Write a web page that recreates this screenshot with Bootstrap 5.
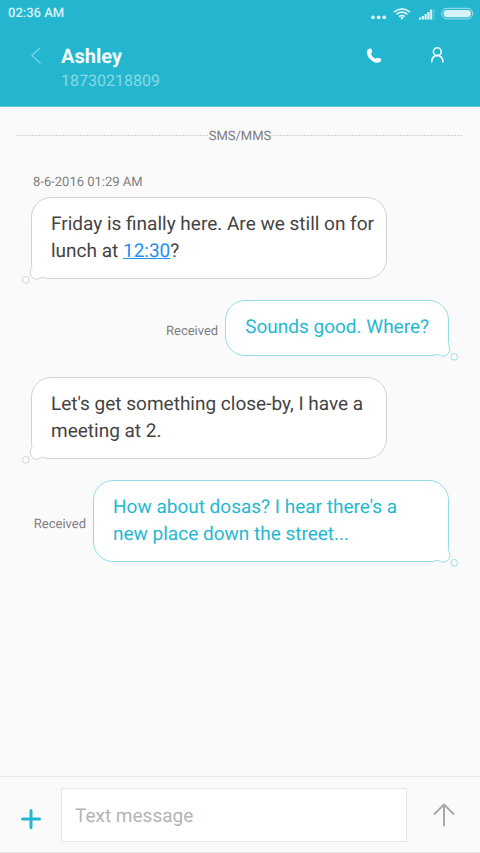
<!DOCTYPE html>
<html lang="en">
<head>
<meta charset="utf-8">
<meta name="viewport" content="width=device-width, initial-scale=1">
<title>Ashley - Messages</title>
<link href="https://cdn.jsdelivr.net/npm/bootstrap@5.3.0/dist/css/bootstrap.min.css" rel="stylesheet">
<style>
  body { font-family: Roboto, "Liberation Sans", sans-serif; background: #fafafa; color: #444; text-rendering: geometricPrecision; }
  svg { display: block; flex: none; }
  .topbar { background: #25b6cf; border-bottom: 1px solid #5fc9dc; }
  .status { height: 27px; padding: 0 6px 0 8px; font-size: 13px; line-height: 29px; font-weight: 500; color: #d8f3f7; }
  .contact { height: 79px; padding: 16px 33px 0 26px; }
  .contact h1 { font-size: 20px; line-height: 27px; font-weight: 700; color: #f2fcfd; }
  .contact p { font-size: 16px; line-height: 22px; color: #88d9e5; }
  .icon-btn { background: none; border: 0; padding: 0; }
  .call { margin-right: 46px; }
  .thread { padding: 17px 17px 0; }
  .divider { font-size: 13px; line-height: 20px; color: #7d7d7d; }
  .divider-label { padding-top: 3px; }
  .dashes { height: 1px; background: repeating-linear-gradient(90deg, #d4d4d4 0 2px, transparent 2px 3px); }
  .messages { padding: 26px 14px 20px; }
  .stamp, .state { font-size: 13px; line-height: 20px; color: #808080; }
  .stamp { padding-left: 2px; margin-bottom: 4px; }
  .state { padding-top: 7px; margin-right: 7px; }
  .message { margin-bottom: 21px; }
  .bubble { position: relative; max-width: 356px; min-height: 56px; padding: 12px 19px 14px; border: 1px solid #d2d2d2; border-radius: 20px; background: #fff; font-size: 19px; line-height: 27px; }
  .incoming .bubble { padding-right: 10px; }
  .outgoing .bubble { border-color: #93dde8; color: #27b8d0; }
  .bubble a { color: #1e90f0; }
  .tail { position: absolute; bottom: -7px; fill: #fff; stroke: #d2d2d2; stroke-width: 1; }
  .incoming .tail { left: -11px; }
  .outgoing .tail { right: -11px; transform: scaleX(-1); stroke: #93dde8; }
  .composer { border-top: 1px solid #e8e8e8; border-bottom: 1px solid #e8e8e8; padding: 11px 0 10px; }
  .composer .icon-btn { width: 61px; }
  .composer .send { width: 73px; }
  .composer .form-control { height: 54px; padding: 0 13px; border: 1px solid #e6e6e6; border-radius: 0; font-size: 19px; color: #444; text-rendering: inherit; }
  .composer .form-control::placeholder { color: #b4b4b4; }
</style>
</head>
<body>
<svg class="d-none" aria-hidden="true">
  <symbol id="tail" viewBox="0 -6 32 30"><path d="M10.500 -3V4.500Q11.600 6 10.500 7.200C7.500 11 10 18 15.500 18.200C18 18.300 19 16.500 21.500 16.500C24 16.500 24 17.500 28 17.500H32"/><circle cx="4.800" cy="18.800" r="3.300"/></symbol>
</svg>
<div class="d-flex flex-column min-vh-100">
  <header class="topbar">
    <div class="status d-flex align-items-center justify-content-between">
      <span>02:36 AM</span>
      <svg width="104" height="16" viewBox="0 0 104 16" fill="#d8f3f7" aria-hidden="true">
        <circle cx="3" cy="11.3" r="1.9"/><circle cx="8.7" cy="11.3" r="1.9"/><circle cx="14.2" cy="11.3" r="1.9"/>
        <g fill="none" stroke="#d8f3f7" stroke-width="1.7"><path d="M24 6.2Q32 -.6 40 6.2"/><path d="M26.6 8.4Q32 4 37.4 8.4"/><path d="M29 10.6Q32 8.4 35 10.6"/></g>
        <circle cx="32" cy="12" r="1.4"/>
        <path d="M49 11.500h2.300v2H49zM51.700 10h2.300v3.500h-2.300zM54.500 8h2.300v5.500h-2.300zM57.300 6h2.300v7.500h-2.300zM60.100 3.500h2.100v10h-2.100z"/><path opacity=".25" d="M63 3h1.600v10.500H63z"/>
        <rect x="71.700" y="2.300" width="31" height="10.600" rx="5.300" fill="none" stroke="#d8f3f7" stroke-opacity=".7"/>
        <rect x="73.500" y="4" width="27.500" height="7.200" rx="3.600"/>
      </svg>
    </div>
    <div class="contact d-flex align-items-start">
      <button class="icon-btn me-3" type="button" aria-label="Back">
        <svg width="19" height="25" viewBox="0 0 19 25" fill="none" stroke="#7bd3e1" stroke-width="1.300"><path d="M14.500 4.500L6 12.500L14.500 20.500"/></svg>
      </button>
      <div class="flex-grow-1">
        <h1 class="mb-0">Ashley</h1>
        <p class="mb-0">18730218809</p>
      </div>
      <button class="icon-btn call" type="button" aria-label="Call">
        <svg width="20" height="26" viewBox="0 0 20 26" fill="#f2fcfd"><path d="M3.300 6.200C4.500 5.200 6.300 5.400 6.800 6.700C7.300 8.100 7.300 9.500 6.200 10.700C6.600 13 8.500 15 10.700 15.500C12 14.500 14 14.700 15.500 15.500C16.800 16.300 16.300 17.900 15.200 18.700C13.500 20.300 10.500 20.200 7.700 18.300C4.600 16.200 2.100 12.700 1.900 9.700C1.800 8.100 2.200 6.900 3.300 6.200Z"/></svg>
      </button>
      <button class="icon-btn" type="button" aria-label="Contact details">
        <svg width="16" height="24" viewBox="0 0 16 24" fill="none" stroke="#f2fcfd" stroke-width="1.600"><circle cx="6.300" cy="8.700" r="3.900"/><path d="M.6 19.500C.4 10 12.200 10 12 19.500"/></svg>
      </button>
    </div>
  </header>

  <main class="thread flex-grow-1">
    <div class="divider d-flex align-items-center">
      <span class="dashes flex-fill"></span><span class="divider-label">SMS/MMS</span><span class="dashes flex-fill"></span>
    </div>
    <div class="messages">
      <div class="stamp">8-6-2016 01:29 AM</div>
      <div class="message incoming d-flex">
        <div class="bubble">
          <svg class="tail" width="32" height="30" aria-hidden="true"><use href="#tail"/></svg>
          <span>Friday is finally here. Are we still on for lunch at <a href="#">12:30</a>?</span>
        </div>
      </div>
      <div class="message outgoing d-flex justify-content-end align-items-center">
        <span class="state">Received</span>
        <div class="bubble">
          <svg class="tail" width="32" height="30" aria-hidden="true"><use href="#tail"/></svg>
          <span>Sounds good. Where?</span>
        </div>
      </div>
      <div class="message incoming d-flex">
        <div class="bubble">
          <svg class="tail" width="32" height="30" aria-hidden="true"><use href="#tail"/></svg>
          <span>Let's get something close-by, I have a meeting at 2.</span>
        </div>
      </div>
      <div class="message outgoing d-flex justify-content-end align-items-center">
        <span class="state">Received</span>
        <div class="bubble">
          <svg class="tail" width="32" height="30" aria-hidden="true"><use href="#tail"/></svg>
          <span>How about dosas? I hear there's a new place down the street...</span>
        </div>
      </div>
    </div>
  </main>

  <form class="composer d-flex align-items-center">
    <button class="icon-btn d-flex justify-content-center flex-shrink-0" type="button" aria-label="Add attachment">
      <svg width="22" height="30" viewBox="0 0 22 30" fill="none" stroke="#25b6cf" stroke-width="3" stroke-linecap="round"><path d="M2.500 19h17M11 10.500v17"/></svg>
    </button>
    <input class="form-control shadow-none" type="text" placeholder="Text message" aria-label="Text message">
    <button class="icon-btn send d-flex justify-content-center flex-shrink-0" type="submit" aria-label="Send">
      <svg width="24" height="26" viewBox="0 0 24 26" fill="none" stroke="#a9a9a9" stroke-width="2" stroke-linecap="round" stroke-linejoin="round"><path d="M12 23.500V2.500M2.500 12L12 2.500L21.500 12"/></svg>
    </button>
  </form>
</div>
<script src="https://cdn.jsdelivr.net/npm/bootstrap@5.3.0/dist/js/bootstrap.bundle.min.js"></script>
</body>
</html>
